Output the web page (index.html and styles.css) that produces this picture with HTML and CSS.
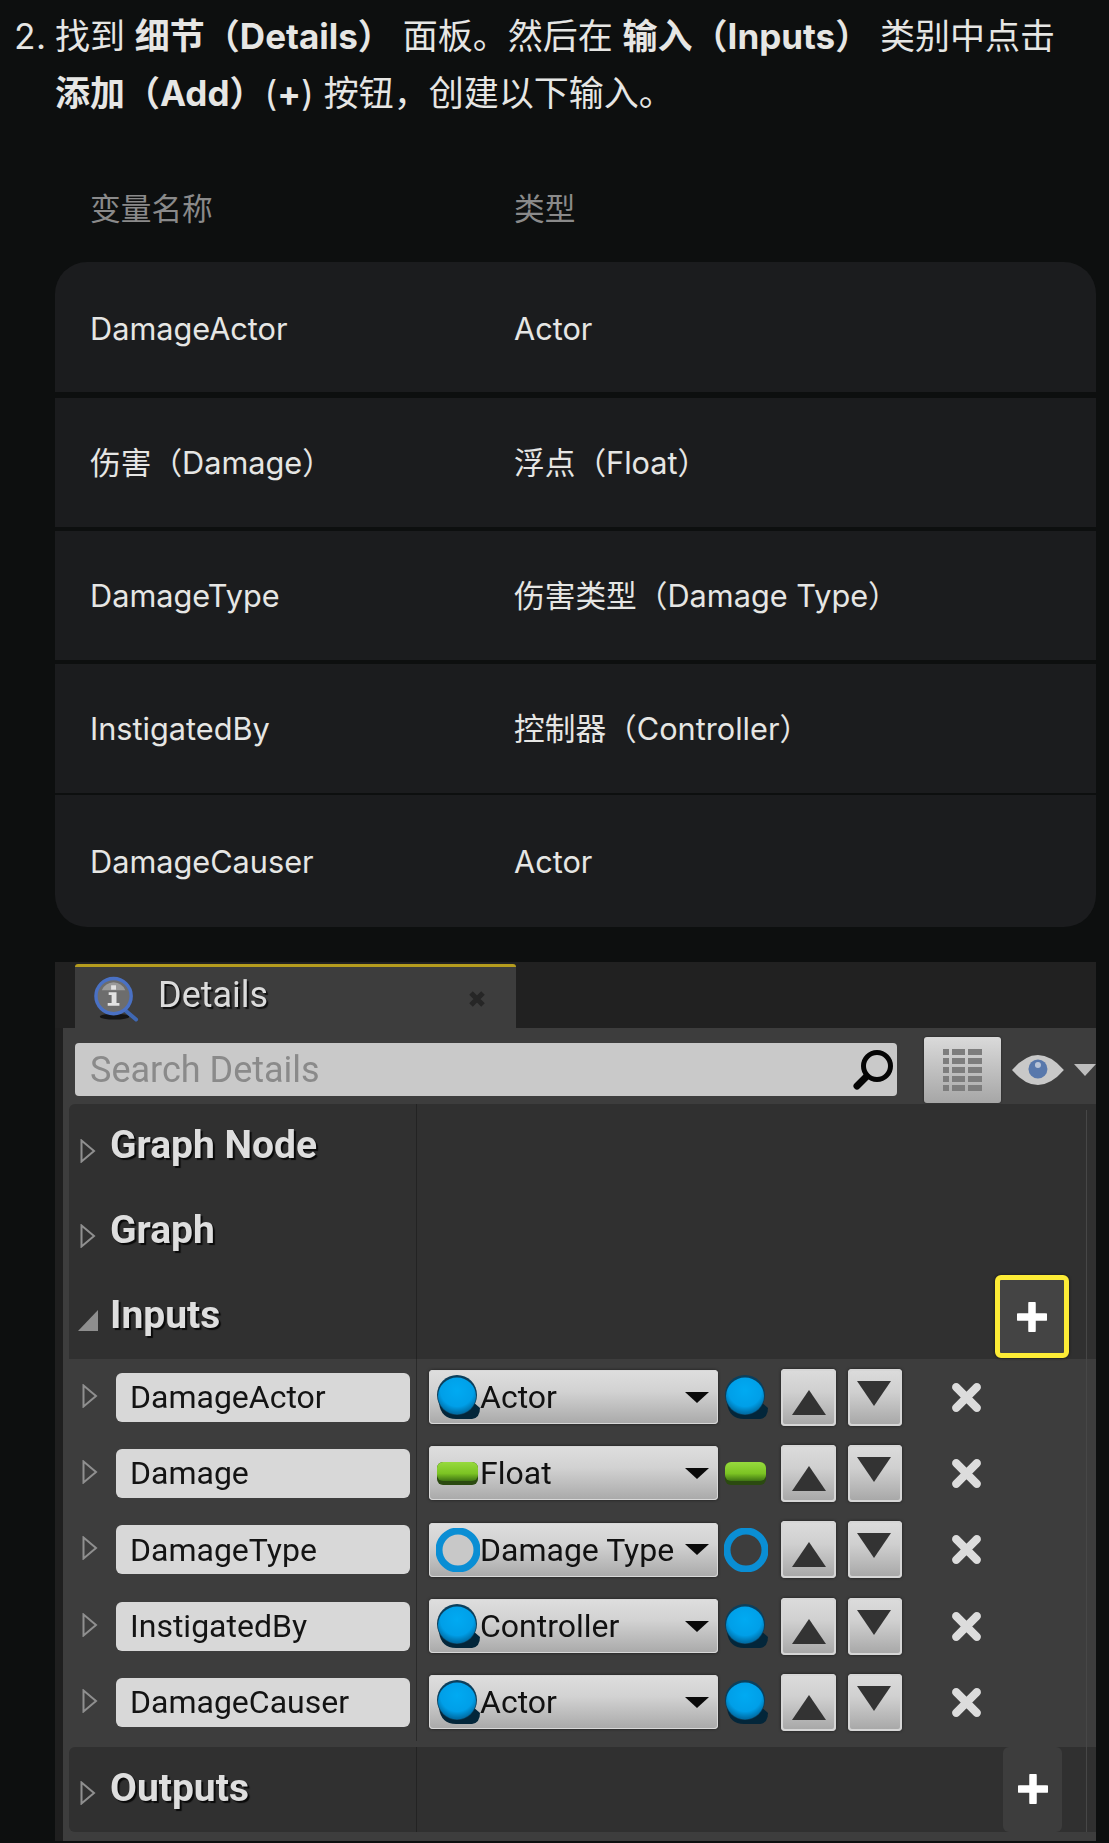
FILE: index.html
```html
<!DOCTYPE html>
<html lang="zh-CN">
<head>
    <meta charset="UTF-8">
    <meta name="viewport" content="width=device-width, initial-scale=1.0">
    <title>Details</title>
    <link rel="stylesheet" href="styles.css">
</head>
<body>
    <svg class="icon-defs" width="0" height="0">
        <defs>
            <radialGradient id="ballBlue" cx="50%" cy="35%" r="62%">
                <stop offset="0" stop-color="#00aaf2"/>
                <stop offset="0.7" stop-color="#009fe8"/>
                <stop offset="1" stop-color="#006fa8"/>
            </radialGradient>
            <linearGradient id="barGreen" x1="0" y1="0" x2="0" y2="1">
                <stop offset="0" stop-color="#97da3e"/>
                <stop offset="0.6" stop-color="#7cc423"/>
                <stop offset="1" stop-color="#3f7414"/>
            </linearGradient>
            <symbol id="pin-ball" viewBox="0 0 44 44">
                <path d="M3 28 Q5 44 20 44 H36 Q44 43 44 33 L36 26 Z" fill="#03263a"/>
                <circle cx="21" cy="20" r="20" fill="#0b3f5c"/>
                <ellipse cx="21" cy="21" rx="19" ry="18.500" fill="url(#ballBlue)"/>
            </symbol>
            <symbol id="pin-bar" viewBox="0 0 44 44">
                <rect x="1" y="11" width="41" height="23" rx="6" fill="#2b4a10"/>
                <rect x="1" y="11" width="41" height="19" rx="6" fill="url(#barGreen)"/>
            </symbol>
            <symbol id="pin-ring" viewBox="0 0 44 44">
                <circle class="ring-shape" cx="22" cy="22" r="19" stroke="#0a8ed4" stroke-width="7"/>
            </symbol>
            <symbol id="cross" viewBox="0 0 32 32">
                <path d="M6 6 L26 26 M26 6 L6 26" stroke="#dcdcdc" stroke-width="8" stroke-linecap="round"/>
            </symbol>
            <symbol id="plus" viewBox="0 0 32 32">
                <path d="M16 2 V30 M2 16 H30" stroke="#fff" stroke-width="8" stroke-linecap="round"/>
            </symbol>
            <symbol id="arrow-closed" viewBox="0 0 16 24">
                <path d="M1.500 1.500 L14 12 L1.500 22.500 Z" fill="none" stroke="#8f8f8f" stroke-width="2"/>
            </symbol>
        </defs>
    </svg>

    <ol class="steps" start="2">
        <li>
            <p class="step-text">找到 <b>细节（Details）</b> 面板。然后在 <b>输入（Inputs）</b> 类别中点击 <b>添加（Add）</b>(<b>+</b>) 按钮，创建以下输入。</p>

            <table class="var-table">
                <thead>
                    <tr><th>变量名称</th><th>类型</th></tr>
                </thead>
                <tbody>
                    <tr><td>DamageActor</td><td>Actor</td></tr>
                    <tr><td>伤害（Damage）</td><td>浮点（Float）</td></tr>
                    <tr><td>DamageType</td><td>伤害类型（Damage Type）</td></tr>
                    <tr><td>InstigatedBy</td><td>控制器（Controller）</td></tr>
                    <tr><td>DamageCauser</td><td>Actor</td></tr>
                </tbody>
            </table>

            <div class="panel">
                <div class="tab-strip">
                    <div class="tab">
                        <svg class="tab-icon" viewBox="0 0 48 46">
                            <ellipse cx="22" cy="41" rx="15" ry="3" fill="#151515"/>
                            <path d="M31 33 L44 44" stroke="#3f68b4" stroke-width="4" stroke-linecap="round"/>
                            <circle cx="21" cy="20" r="18" fill="#6d6d6d" stroke="#4a71c4" stroke-width="3.500"/>
                            <path d="M21 6 A14 14 0 0 1 33 14 H9 A14 14 0 0 1 21 6" fill="#9a9a9a"/>
                            <rect x="18.500" y="9" width="5" height="4.500" fill="#e2e2e2"/>
                            <path d="M16 16 H24 V27 H27 V30 H15 V27 H19 V19 H16 Z" fill="#e2e2e2"/>
                        </svg>
                        <span class="tab-title">Details</span>
                        <svg class="tab-close" viewBox="0 0 18 18">
                            <path d="M3 3 L15 15 M15 3 L3 15" stroke="#262626" stroke-width="5"/>
                        </svg>
                    </div>
                </div>

                <div class="details">
                    <div class="search-row">
                        <div class="search">
                            <span>Search Details</span>
                            <svg class="search-icon" viewBox="0 0 42 42">
                                <circle cx="25" cy="17" r="13.500" fill="none" stroke="#050505" stroke-width="5"/>
                                <path d="M14 28 L5 37" stroke="#050505" stroke-width="7" stroke-linecap="round"/>
                            </svg>
                        </div>
                        <div class="grid-btn">
                            <svg viewBox="0 0 40 42" width="40" height="42">
                                <g fill="#7d7d7d">
                                    <rect x="0" y="0" width="6" height="6"/><rect x="9" y="0" width="13" height="6"/><rect x="25" y="0" width="14" height="6"/>
                                    <rect x="0" y="9" width="6" height="6"/><rect x="9" y="9" width="13" height="6"/><rect x="25" y="9" width="14" height="6"/>
                                    <rect x="0" y="18" width="6" height="6"/><rect x="9" y="18" width="13" height="6"/><rect x="25" y="18" width="14" height="6"/>
                                    <rect x="0" y="27" width="6" height="6"/><rect x="9" y="27" width="13" height="6"/><rect x="25" y="27" width="14" height="6"/>
                                    <rect x="0" y="36" width="6" height="6"/><rect x="9" y="36" width="13" height="6"/><rect x="25" y="36" width="14" height="6"/>
                                </g>
                            </svg>
                        </div>
                        <svg class="eye" viewBox="0 0 52 30">
                            <path d="M0 15 Q13 0 26 0 Q39 0 52 15 Q39 30 26 30 Q13 30 0 15 Z" fill="#c8c8c8"/>
                            <circle cx="26" cy="14" r="9.500" fill="#5878ac"/>
                            <circle cx="26" cy="10" r="3" fill="#b8c4d8"/>
                        </svg>
                        <span class="eye-caret"></span>
                    </div>

                    <div class="list">
                        <div class="category">
                            <div class="name-col">
                                <svg class="cat-arrow"><use href="#arrow-closed"/></svg>
                                <span class="cat-title">Graph Node</span>
                            </div>
                            <div class="value-col"></div>
                        </div>
                        <div class="category">
                            <div class="name-col">
                                <svg class="cat-arrow"><use href="#arrow-closed"/></svg>
                                <span class="cat-title">Graph</span>
                            </div>
                            <div class="value-col"></div>
                        </div>
                        <div class="category">
                            <div class="name-col">
                                <span class="cat-open"></span>
                                <span class="cat-title">Inputs</span>
                            </div>
                            <div class="value-col">
                                <div class="add-btn add-btn-marked"><svg class="plus"><use href="#plus"/></svg></div>
                            </div>
                        </div>

                        <div class="inputs">
                            <div class="input-row">
                                <div class="input-name">
                                    <svg class="row-arrow"><use href="#arrow-closed"/></svg>
                                    <div class="name-box">DamageActor</div>
                                </div>
                                <div class="input-value">
                                    <div class="dropdown">
                                        <svg class="pin-in"><use href="#pin-ball"/></svg>
                                        <span>Actor</span>
                                        <i class="caret"></i>
                                    </div>
                                    <svg class="pin"><use href="#pin-ball"/></svg>
                                    <div class="move-btn"><i class="tri-up"></i></div>
                                    <div class="move-btn move-down"><i class="tri-down"></i></div>
                                    <svg class="remove"><use href="#cross"/></svg>
                                </div>
                            </div>
                            <div class="input-row">
                                <div class="input-name">
                                    <svg class="row-arrow"><use href="#arrow-closed"/></svg>
                                    <div class="name-box">Damage</div>
                                </div>
                                <div class="input-value">
                                    <div class="dropdown">
                                        <svg class="pin-in"><use href="#pin-bar"/></svg>
                                        <span>Float</span>
                                        <i class="caret"></i>
                                    </div>
                                    <svg class="pin"><use href="#pin-bar"/></svg>
                                    <div class="move-btn"><i class="tri-up"></i></div>
                                    <div class="move-btn move-down"><i class="tri-down"></i></div>
                                    <svg class="remove"><use href="#cross"/></svg>
                                </div>
                            </div>
                            <div class="input-row">
                                <div class="input-name">
                                    <svg class="row-arrow"><use href="#arrow-closed"/></svg>
                                    <div class="name-box">DamageType</div>
                                </div>
                                <div class="input-value">
                                    <div class="dropdown">
                                        <svg class="pin-in"><use href="#pin-ring"/></svg>
                                        <span>Damage Type</span>
                                        <i class="caret"></i>
                                    </div>
                                    <svg class="pin"><use href="#pin-ring"/></svg>
                                    <div class="move-btn"><i class="tri-up"></i></div>
                                    <div class="move-btn move-down"><i class="tri-down"></i></div>
                                    <svg class="remove"><use href="#cross"/></svg>
                                </div>
                            </div>
                            <div class="input-row">
                                <div class="input-name">
                                    <svg class="row-arrow"><use href="#arrow-closed"/></svg>
                                    <div class="name-box">InstigatedBy</div>
                                </div>
                                <div class="input-value">
                                    <div class="dropdown">
                                        <svg class="pin-in"><use href="#pin-ball"/></svg>
                                        <span>Controller</span>
                                        <i class="caret"></i>
                                    </div>
                                    <svg class="pin"><use href="#pin-ball"/></svg>
                                    <div class="move-btn"><i class="tri-up"></i></div>
                                    <div class="move-btn move-down"><i class="tri-down"></i></div>
                                    <svg class="remove"><use href="#cross"/></svg>
                                </div>
                            </div>
                            <div class="input-row">
                                <div class="input-name">
                                    <svg class="row-arrow"><use href="#arrow-closed"/></svg>
                                    <div class="name-box">DamageCauser</div>
                                </div>
                                <div class="input-value">
                                    <div class="dropdown">
                                        <svg class="pin-in"><use href="#pin-ball"/></svg>
                                        <span>Actor</span>
                                        <i class="caret"></i>
                                    </div>
                                    <svg class="pin"><use href="#pin-ball"/></svg>
                                    <div class="move-btn"><i class="tri-up"></i></div>
                                    <div class="move-btn move-down"><i class="tri-down"></i></div>
                                    <svg class="remove"><use href="#cross"/></svg>
                                </div>
                            </div>
                        </div>

                        <div class="category">
                            <div class="name-col">
                                <svg class="cat-arrow"><use href="#arrow-closed"/></svg>
                                <span class="cat-title">Outputs</span>
                            </div>
                            <div class="value-col">
                                <div class="add-btn"><svg class="plus"><use href="#plus"/></svg></div>
                            </div>
                        </div>
                    </div>
                </div>
            </div>
        </li>
    </ol>
</body>
</html>
```

FILE: styles.css
```css
html, body {
    margin: 0;
    padding: 0;
    height: 1843px;
    overflow: hidden;
}

body {
    background-color: #0d0f0f;
    color: #e6e6e4;
    font-family: Inter, "Noto Sans CJK SC", sans-serif;
}

.icon-defs {
    position: absolute;
}

.steps {
    margin: 0;
    padding: 8px 13px 0 55px;
    font-size: 35px;
}

.step-text {
    margin: 0;
    line-height: 57px;
}

/* table */
.var-table {
    width: 100%;
    margin-top: 34px;
    border-collapse: separate;
    border-spacing: 0;
    table-layout: fixed;
    font-size: 30.7px;
    line-height: 40px;
}

.var-table th,
.var-table td {
    text-align: left;
    padding: 0 0 0 35px;
}

.var-table th:first-child,
.var-table td:first-child {
    width: 389px;
}

.var-table th {
    height: 106px;
    color: #8a8a8a;
    font-weight: 400;
}

.var-table td {
    height: 129px;
    background: #1b1c1e;
    border-bottom: 4px solid #0d0f0f;
}

.var-table tbody tr:first-child td {
    height: 126px;
    padding-top: 4px;
    border-bottom-width: 6px;
}

.var-table tbody tr:nth-child(4) td {
    border-bottom-width: 2px;
}

.var-table tbody tr:last-child td {
    border-bottom: 0;
    height: 130px;
    padding-top: 2px;
}

.var-table tbody tr:first-child td:first-child { border-top-left-radius: 32px; }
.var-table tbody tr:first-child td:last-child { border-top-right-radius: 32px; }
.var-table tbody tr:last-child td:first-child { border-bottom-left-radius: 32px; }
.var-table tbody tr:last-child td:last-child { border-bottom-right-radius: 32px; }

/* details panel picture */
.panel {
    margin-top: 35px;
    height: 879px;
    background: #1f1f1f;
    font-family: Roboto, sans-serif;
    overflow: hidden;
    filter: blur(0.7px);
}

.tab-strip {
    height: 66px;
    box-sizing: border-box;
    padding: 2px 0 0 20px;
    background: #212121;
}

.tab {
    width: 441px;
    height: 64px;
    box-sizing: border-box;
    display: flex;
    align-items: center;
    padding: 3px 30px 0 18px;
    background: #3d3d3d;
    border-top: 3px solid #b59c1e;
    border-radius: 3px 3px 0 0;
}

.tab-icon {
    width: 47px;
    height: 46px;
    flex: none;
}

.tab-title {
    margin: -8px 0 0 18px;
    font-size: 36px;
    color: #dcdcdc;
    text-shadow: 2px 2px 1px #111;
}

.tab-close {
    margin-left: auto;
    width: 18px;
    height: 18px;
}

.details {
    margin-left: 8px;
    height: 813px;
    background: #3d3d3d;
}

.search-row {
    height: 76px;
    box-sizing: border-box;
    padding: 7px 0 0 12px;
    display: flex;
    align-items: center;
}

.search {
    width: 824px;
    height: 53px;
    box-sizing: border-box;
    display: flex;
    align-items: center;
    justify-content: space-between;
    padding: 0 3px 0 15px;
    background: #c9c9c9;
    border-radius: 4px;
    font-size: 36px;
    color: #8a8a8a;
}

.search-icon {
    width: 42px;
    height: 42px;
}

.grid-btn {
    width: 77px;
    height: 66px;
    margin-left: 27px;
    display: flex;
    align-items: center;
    justify-content: center;
    background: linear-gradient(#dadada, #a6a6a6);
    border-radius: 3px;
    box-shadow: 0 0 2px #1c1c1c;
}

.eye {
    width: 52px;
    height: 30px;
    margin-left: 11px;
}

.eye-caret {
    width: 0;
    height: 0;
    margin-left: 10px;
    border-left: 11px solid transparent;
    border-right: 11px solid transparent;
    border-top: 12px solid #bdbdbd;
}

.list {
    position: relative;
    margin-left: 6px;
}

/* thin line near the right edge */
.list::after {
    content: "";
    position: absolute;
    top: 6px;
    bottom: 0;
    right: 9px;
    width: 1px;
    background: #474747;
}

.category {
    height: 85px;
    display: flex;
    background: #303030;
}

.category:first-child {
    border-radius: 6px 0 0 0;
}

.category:last-child {
    border-radius: 6px 0 0 6px;
}

.name-col {
    width: 348px;
    flex: none;
    display: flex;
    align-items: center;
    border-right: 1px solid #232323;
    padding-left: 11px;
    box-sizing: border-box;
}

.value-col {
    flex: 1;
    display: flex;
    justify-content: flex-end;
}

.cat-arrow {
    width: 16px;
    height: 24px;
    flex: none;
    margin-top: 8px;
}

.cat-open {
    width: 0;
    height: 0;
    margin: 8px -2px 0 -2px;
    border-left: 20px solid transparent;
    border-bottom: 21px solid #8e8e8e;
}

.cat-title {
    margin: -3px 0 0 14px;
    font-size: 39px;
    font-weight: 700;
    color: #dedede;
    text-shadow: 2px 2px 1px #0a0a0a;
}

.add-btn {
    width: 59px;
    margin-right: 34px;
    display: flex;
    align-items: center;
    justify-content: center;
    background: #3d3d3d;
    border-radius: 6px;
}

.add-btn-marked {
    width: 74px;
    height: 83px;
    box-sizing: border-box;
    margin: 1px 27px 0 0;
    background: #444;
    border: 5px solid #fdec36;
    box-shadow: 0 0 3px #111;
}

.plus {
    width: 30px;
    height: 30px;
}

.inputs {
    padding-bottom: 6px;
    background: #3d3d3d;
}

.input-row {
    height: 76.33px;
    display: flex;
}

.input-name {
    width: 348px;
    flex: none;
    box-sizing: border-box;
    display: flex;
    align-items: center;
    padding-left: 13px;
    border-right: 1px solid #2a2a2a;
}

.row-arrow {
    width: 16px;
    height: 24px;
    flex: none;
    margin-top: -3px;
}

.name-box {
    width: 294px;
    height: 49px;
    box-sizing: border-box;
    margin-left: 18px;
    padding-left: 14px;
    display: flex;
    align-items: center;
    background: #d8d8d8;
    border-radius: 6px;
    font-size: 32px;
    color: #141414;
}

.input-value {
    display: flex;
    align-items: center;
    padding-left: 12px;
}

.dropdown {
    width: 289px;
    height: 54px;
    box-sizing: border-box;
    display: flex;
    align-items: center;
    padding: 0 9px 0 7px;
    background: linear-gradient(#dedede, #d2d2d2 40%, #a9a9a9);
    border-radius: 4px;
    box-shadow: 0 0 3px #1b1b1b, inset 0 0 0 1px #d8d8d8;
    font-size: 32px;
    color: #111;
}

.ring-shape {
    fill: var(--ring-fill, none);
}

.pin-in {
    --ring-fill: #c8c8c8;
    width: 44px;
    height: 44px;
    flex: none;
}

.caret {
    width: 0;
    height: 0;
    margin-left: auto;
    border-left: 12px solid transparent;
    border-right: 12px solid transparent;
    border-top: 11px solid #0a0a0a;
}

.pin {
    width: 44px;
    height: 44px;
    flex: none;
    margin-left: 6px;
}

.move-btn {
    width: 55px;
    height: 57px;
    margin-left: 13px;
    display: flex;
    align-items: flex-end;
    justify-content: center;
    padding-bottom: 11px;
    box-sizing: border-box;
    background: linear-gradient(#dcdcdc, #d0d0d0 40%, #a6a6a6);
    border-radius: 4px;
    box-shadow: 0 0 3px #1b1b1b, inset 0 0 0 2px #d6d6d6;
}

.move-down {
    width: 54px;
    margin-left: 12px;
    align-items: flex-start;
    padding: 12px 3px 0 0;
}

.tri-up {
    width: 0;
    height: 0;
    border-left: 17px solid transparent;
    border-right: 17px solid transparent;
    border-bottom: 25px solid #333;
}

.tri-down {
    width: 0;
    height: 0;
    border-left: 17px solid transparent;
    border-right: 17px solid transparent;
    border-top: 25px solid #333;
}

.remove {
    width: 33px;
    height: 33px;
    flex: none;
    margin-left: 48px;
}
```
